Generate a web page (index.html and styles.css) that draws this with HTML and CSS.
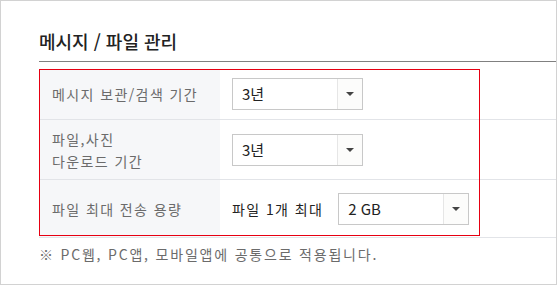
FILE: index.html
```html
<!DOCTYPE html>
<html lang="ko">
<head>
    <meta charset="UTF-8">
    <title>메시지 / 파일 관리</title>
    <link rel="stylesheet" href="styles.css">
</head>
<body>
    <section class="panel">
        <h2 class="panel-title">메시지 / 파일 관리</h2>

        <div class="settings">
            <div class="row row-first">
                <div class="label">메시지 보관/검색 기간</div>
                <div class="field">
                    <div class="select">
                        <span class="select-value">3년</span>
                        <span class="select-btn"><i class="arrow"></i></span>
                    </div>
                </div>
            </div>
            <div class="row row-second">
                <div class="label">파일,사진<br>다운로드 기간</div>
                <div class="field">
                    <div class="select">
                        <span class="select-value">3년</span>
                        <span class="select-btn"><i class="arrow"></i></span>
                    </div>
                </div>
            </div>
            <div class="row row-third">
                <div class="label">파일 최대 전송 용량</div>
                <div class="field">
                    <span class="field-text">파일 1개 최대</span>
                    <div class="select">
                        <span class="select-value">2 GB</span>
                        <span class="select-btn"><i class="arrow"></i></span>
                    </div>
                </div>
            </div>
            <div class="highlight"></div>
        </div>

        <p class="note">※ PC웹, PC앱, 모바일앱에 공통으로 적용됩니다.</p>
    </section>
</body>
</html>
```

FILE: styles.css
```css
* {
    margin: 0;
    padding: 0;
    box-sizing: border-box;
}

body {
    font-family: 'Noto Sans CJK KR', 'Noto Sans', sans-serif;
    background: #fff;
}

.panel {
    width: 557px;
    height: 285px;
    border: 1px solid #d2d2d2;
    padding-left: 38px;
}

.panel-title {
    height: 61px;
    padding-top: 29px;
    font-size: 18px;
    font-weight: 500;
    color: #222;
    line-height: 22px;
    border-bottom: 1px solid #808080;
}

.settings {
    position: relative;
    margin-top: 7px;
}

.row {
    display: flex;
    border-bottom: 1px solid #e2e4e8;
}

.row-first { height: 51px; }
.row-second { height: 60px; }
.row-third { height: 58px; }

.label {
    width: 181px;
    background: #f6f7f9;
    padding-left: 13px;
    display: flex;
    align-items: center;
    font-size: 14px;
    letter-spacing: 1.4px;
    line-height: 22px;
    color: #6b6b6b;
}

.field {
    flex: 1;
    display: flex;
    align-items: center;
    padding-left: 12px;
}

.field-text {
    font-size: 14px;
    letter-spacing: 1.4px;
    color: #222;
    margin-right: 15px;
}

.select {
    width: 131px;
    height: 32px;
    border: 1px solid #c8c8c8;
    display: flex;
    background: #fff;
}

.select-value {
    flex: 1;
    padding-left: 9px;
    font-size: 15px;
    line-height: 30px;
    color: #222;
}

.select-btn {
    width: 25px;
    border-left: 1px solid #e6e6e6;
    background: #fcfcfb;
    display: flex;
    align-items: center;
    justify-content: center;
}

.arrow {
    width: 0;
    height: 0;
    border-left: 4px solid transparent;
    border-right: 4px solid transparent;
    border-top: 4px solid #444;
}

.highlight {
    position: absolute;
    left: 0;
    top: 0;
    width: 441px;
    height: 167px;
    border: 1px solid #e60012;
    pointer-events: none;
}

.note {
    margin-top: 6px;
    font-size: 14px;
    letter-spacing: 1.8px;
    color: #6b6b6b;
}
```
